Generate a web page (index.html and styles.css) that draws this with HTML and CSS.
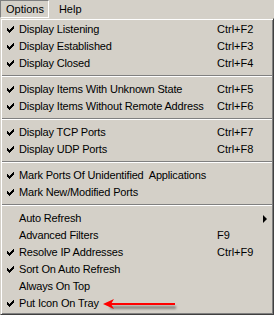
FILE: index.html
```html
<!DOCTYPE html>
<html>
<head>
<meta charset="utf-8">
<link rel="stylesheet" href="styles.css">
</head>
<body>
<div class="menubar">
  <div class="mb-item pressed">Options</div>
  <div class="mb-item">Help</div>
</div>
<div class="menu">
  <div class="row checked"><span class="chk"></span><span class="label">Display Listening</span><span class="key">Ctrl+F2</span></div>
  <div class="row checked"><span class="chk"></span><span class="label">Display Established</span><span class="key">Ctrl+F3</span></div>
  <div class="row checked"><span class="chk"></span><span class="label">Display Closed</span><span class="key">Ctrl+F4</span></div>
  <div class="sep"></div>
  <div class="row checked"><span class="chk"></span><span class="label">Display Items With Unknown State</span><span class="key">Ctrl+F5</span></div>
  <div class="row checked"><span class="chk"></span><span class="label">Display Items Without Remote Address</span><span class="key">Ctrl+F6</span></div>
  <div class="sep"></div>
  <div class="row checked"><span class="chk"></span><span class="label">Display TCP Ports</span><span class="key">Ctrl+F7</span></div>
  <div class="row checked"><span class="chk"></span><span class="label">Display UDP Ports</span><span class="key">Ctrl+F8</span></div>
  <div class="sep"></div>
  <div class="row checked"><span class="chk"></span><span class="label">Mark Ports Of Unidentified&nbsp; Applications</span><span class="key"></span></div>
  <div class="row checked"><span class="chk"></span><span class="label">Mark New/Modified Ports</span><span class="key"></span></div>
  <div class="sep"></div>
  <div class="row"><span class="chk"></span><span class="label">Auto Refresh</span><span class="key sub"><span class="tri"></span></span></div>
  <div class="row"><span class="chk"></span><span class="label">Advanced Filters</span><span class="key">F9</span></div>
  <div class="row checked"><span class="chk"></span><span class="label">Resolve IP Addresses</span><span class="key">Ctrl+F9</span></div>
  <div class="row checked"><span class="chk"></span><span class="label">Sort On Auto Refresh</span><span class="key"></span></div>
  <div class="row"><span class="chk"></span><span class="label">Always On Top</span><span class="key"></span></div>
  <div class="row checked"><span class="chk"></span><span class="label">Put Icon On Tray</span><span class="key"></span></div>
  <svg class="arrow" width="80" height="16" viewBox="0 0 80 16">
    <defs>
      <filter id="blur" x="-10%" y="-100%" width="120%" height="300%"><feGaussianBlur stdDeviation="1.2"/></filter>
    </defs>
    <rect x="8" y="9" width="66" height="3" fill="#8a8782" filter="url(#blur)"/>
    <rect x="8" y="6" width="65" height="2" fill="#ff0000"/>
    <polygon points="1,7 12,2 9,7 12,12" fill="#ff0000"/>
  </svg>
</div>
</body>
</html>
```
FILE: styles.css
```css
html, body {
  margin: 0;
  padding: 0;
}
body {
  background: #d4d0c8;
  font-family: "Liberation Sans", Arial, sans-serif;
  font-size: 11px;
  color: #000;
  width: 274px;
  height: 315px;
  overflow: hidden;
}
.menubar {
  display: flex;
  height: 18px;
  align-items: stretch;
}
.mb-item {
  padding: 0 6px 0 6px;
  line-height: 16px;
  height: 16px;
  border: 1px solid transparent;
}
.mb-item.pressed {
  border-color: #808080 #ffffff #ffffff #808080;
  padding: 0 4px 0 5px;
}
.mb-item + .mb-item {
  padding-left: 9px;
}
.menu {
  position: relative;
  width: 274px;
  height: 297px;
  box-sizing: border-box;
  border-style: solid;
  border-width: 1px;
  border-color: #d4d0c8 #404040 #404040 #d4d0c8;
  box-shadow: inset 1px 1px 0 #ffffff, inset -1px -1px 0 #808080;
  padding: 2px 2px 1px 2px;
}
.row {
  display: grid;
  grid-template-columns: 16px 198px 1fr;
  height: 17px;
  line-height: 17px;
  white-space: nowrap;
}
.label {
  letter-spacing: -0.17px;
}
.chk {
  position: relative;
}
.row.checked .chk::before {
  content: "";
  position: absolute;
  left: 4px;
  top: 5px;
  width: 7px;
  height: 7px;
  background:
    linear-gradient(#000, #000) 6px 0 / 1px 3px no-repeat,
    linear-gradient(#000, #000) 5px 1px / 1px 3px no-repeat,
    linear-gradient(#000, #000) 4px 2px / 1px 3px no-repeat,
    linear-gradient(#000, #000) 3px 3px / 1px 3px no-repeat,
    linear-gradient(#000, #000) 2px 4px / 1px 3px no-repeat,
    linear-gradient(#000, #000) 1px 3px / 1px 3px no-repeat,
    linear-gradient(#000, #000) 0 2px / 1px 3px no-repeat;
}
.key {
  position: relative;
}
.tri {
  position: absolute;
  left: 46px;
  top: 5px;
  width: 0;
  height: 0;
  border-left: 4px solid #000;
  border-top: 4px solid transparent;
  border-bottom: 4px solid transparent;
}
.sep {
  height: 9px;
  position: relative;
  margin: 0 -1px;
}
.sep::before {
  content: "";
  position: absolute;
  left: 0;
  right: 0;
  top: 3px;
  height: 1px;
  background: #808080;
  box-shadow: 0 1px 0 #ffffff;
}
.arrow {
  position: absolute;
  left: 101px;
  top: 278px;
}
```
